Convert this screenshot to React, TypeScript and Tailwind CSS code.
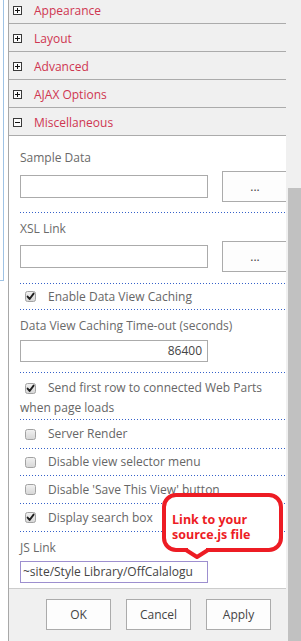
import React from "react";

function Dotted() {
  return (
    <div className="ml-[11px] h-px shrink-0 bg-[linear-gradient(to_right,#3561c9_1px,transparent_1px)] bg-[length:3px_1px]" />
  );
}

function Box({ checked }: { checked: boolean }) {
  return (
    <svg width="11" height="11" viewBox="0 0 11 11" className="block shrink-0">
      <defs>
        <linearGradient id="cbg" x1="0" y1="0" x2="0" y2="1">
          <stop offset="0" stopColor="#f2f2f2" />
          <stop offset="1" stopColor="#d6d6d6" />
        </linearGradient>
      </defs>
      <rect x="0.5" y="0.5" width="10" height="10" rx="2" fill="url(#cbg)" stroke="#a2a2a2" />
      {checked && (
        <path d="M2.6 5.6 L4.6 8 L8.6 2.6" fill="none" stroke="#1e1e1e" strokeWidth="1.9" strokeLinecap="round" strokeLinejoin="round" />
      )}
    </svg>
  );
}

function Toggle({ open }: { open: boolean }) {
  return (
    <svg width="9" height="9" viewBox="0 0 9 9" className="block shrink-0 mt-[2px]" shapeRendering="crispEdges">
      <rect x="0.5" y="0.5" width="8" height="8" fill="#fbfbfb" stroke="#3a3a3a" />
      <rect x="2" y="4" width="5" height="1" fill="#111" />
      {!open && <rect x="4" y="2" width="1" height="5" fill="#111" />}
    </svg>
  );
}

function Head({ label, open, first }: { label: string; open?: boolean; first?: boolean }) {
  return (
    <div
      className={`flex items-center h-[28px] shrink-0 border-b border-[#ababab] bg-[#f0f0f0] pl-[4px] ${first ? "-mt-[4px]" : ""}`}
    >
      <Toggle open={!!open} />
      <span className="relative top-[1px] ml-[12px] text-[12px] text-[#cf3650]">{label}</span>
    </div>
  );
}

function InputRow() {
  return (
    <div className="flex items-center h-[31px] mt-[3px] shrink-0">
      <div className="w-[188px] h-[23px] shrink-0 border border-[#ababab] bg-white" />
      <div className="ml-[14px] w-[66px] h-[31px] shrink-0 border border-[#ababab] bg-[#fdfdfd] flex items-center justify-center text-[12px] text-[#444]">
        ...
      </div>
    </div>
  );
}

function CheckRow({ label, checked, cls }: { label: string; checked: boolean; cls: string }) {
  return (
    <div className={`flex items-center shrink-0 pl-[16px] ${cls}`}>
      <Box checked={checked} />
      <span className="ml-[12px] text-[12px] text-[#666] whitespace-nowrap">{label}</span>
    </div>
  );
}

function Btn({ label }: { label: string }) {
  return (
    <div className="w-[65px] h-[31px] shrink-0 border border-[#ababab] bg-[#fdfdfd] flex items-center justify-center text-[12px] text-[#444]">
      {label}
    </div>
  );
}

export default function App() {
  return (
    <div className="relative flex w-[301px] h-[641px] overflow-hidden bg-white font-['Open_Sans',sans-serif]">
      {/* left strip */}
      <div className="w-[8px] shrink-0">
        <div className="w-[4px] h-[281px] border-r border-b border-[#9fc3e5]" />
      </div>

      {/* panel */}
      <div className="w-[278px] shrink-0 border-l border-[#a8a8a8] flex flex-col overflow-hidden">
        <Head label="Appearance" first />
        <Head label="Layout" />
        <Head label="Advanced" />
        <Head label="AJAX Options" />
        <Head label="Miscellaneous" open />

        <div className="flex-1 flex flex-col bg-white">
          {/* Sample Data */}
          <div className="h-[76px] shrink-0 pl-[11px] pt-[12px] flex flex-col">
            <div className="h-[20px] leading-[20px] text-[12px] text-[#6a6a6a]">Sample Data</div>
            <InputRow />
          </div>
          <Dotted />

          {/* XSL Link */}
          <div className="h-[70px] shrink-0 pl-[11px] pt-[6px] flex flex-col">
            <div className="h-[20px] leading-[20px] text-[12px] text-[#6a6a6a]">XSL Link</div>
            <div className="-mt-[1px]">
              <InputRow />
            </div>
          </div>
          <Dotted />

          <CheckRow label="Enable Data View Caching" checked cls="h-[25px]" />
          <Dotted />

          {/* Time-out */}
          <div className="h-[62px] shrink-0 pl-[11px] pt-[6px] flex flex-col">
            <div className="h-[20px] leading-[20px] text-[12px] text-[#6a6a6a] whitespace-nowrap">
              Data View Caching Time-out (seconds)
            </div>
            <div className="mt-[4px] w-[188px] h-[22px] border border-[#ababab] flex items-center justify-end pr-[5px] text-[12px] text-[#444]">
              86400
            </div>
          </div>
          <Dotted />

          {/* Send first row */}
          <div className="h-[46px] shrink-0 pl-[11px] pt-[5px] flex flex-col">
            <div className="h-[20px] flex items-center pl-[5px]">
              <Box checked />
              <span className="ml-[12px] text-[12px] text-[#666] whitespace-nowrap">
                Send first row to connected Web Parts
              </span>
            </div>
            <div className="h-[20px] leading-[20px] text-[12px] text-[#666]">when page loads</div>
          </div>
          <Dotted />

          <CheckRow label="Server Render" checked={false} cls="h-[28px]" />
          <Dotted />
          <CheckRow label="Disable view selector menu" checked={false} cls="h-[26px]" />
          <Dotted />
          <CheckRow label="Disable 'Save This View' button" checked={false} cls="h-[27px]" />
          <Dotted />
          <CheckRow label="Display search box" checked cls="h-[27px]" />
          <Dotted />

          {/* JS Link */}
          <div className="h-[56px] shrink-0 pl-[11px] pt-[6px] flex flex-col">
            <div className="h-[20px] leading-[20px] text-[12px] text-[#6a6a6a]">JS Link</div>
            <div className="mt-[3px] w-[188px] h-[22px] border border-[#9d8fcf] flex items-center pl-[2px] pr-[5px] overflow-hidden whitespace-nowrap text-[12px] text-[#444]">
              ~site/Style Library/OffCalalogu
            </div>
          </div>
        </div>

        {/* footer */}
        <div className="h-[53px] shrink-0 bg-[#f0f0f0] border-t border-[#cccccc] flex justify-end items-start pt-[10px] pr-[15px] gap-[15px]">
          <Btn label="OK" />
          <Btn label="Cancel" />
          <Btn label="Apply" />
        </div>
      </div>

      {/* right scroll column */}
      <div className="w-[15px] shrink-0 bg-[#f0f0f0] flex flex-col">
        <div className="mt-[188px] ml-[2px] flex-1 bg-[#c1c1c1]" />
      </div>

      {/* callout */}
      <div className="absolute left-[162px] top-[493px] w-[121px] h-[59px] border-4 border-[#ed1c24] rounded-[14px] bg-white pl-[6px] pt-[15px]">
        <div className="text-[12.5px] leading-[15px] font-bold text-[#ed1c24] whitespace-nowrap">Link to your</div>
        <div className="text-[12.5px] leading-[15px] font-bold text-[#ed1c24] whitespace-nowrap">source.js file</div>
      </div>
      <svg width="26" height="14" viewBox="0 0 26 14" className="absolute left-[184px] top-[546px]">
        <polygon points="4,0 22,0 22,4 13,9 4,4" fill="#ffffff" />
        <polyline points="2,4 13,11 24,4" fill="none" stroke="#ed1c24" strokeWidth="4" strokeLinejoin="round" strokeLinecap="round" />
      </svg>
    </div>
  );
}
